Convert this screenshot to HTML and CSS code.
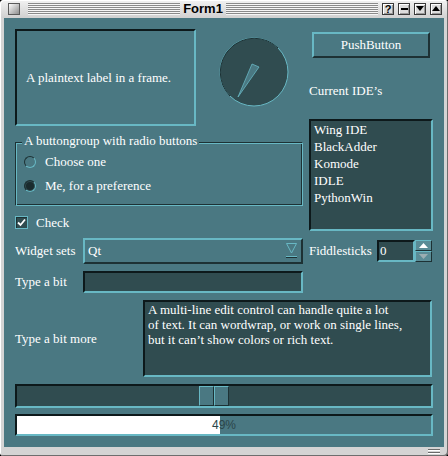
FILE: index.html
```html
<!DOCTYPE html>
<html>
<head>
<meta charset="utf-8">
<title>Form1</title>
<link rel="stylesheet" href="styles.css">
</head>
<body>
<div class="window">
  <div class="titlebar">
    <span class="close-box"></span>
    <span class="stripes"></span>
    <span class="title">Form1</span>
    <span class="stripes stripes-r"></span>
    <span class="tbtn">?</span>
    <span class="tbtn"><span class="tb-dash"></span></span>
    <span class="tbtn"><svg width="8" height="6" viewBox="0 0 8 6"><polygon points="0,0 8,0 4,5" fill="#000"/></svg></span>
    <span class="tbtn"><svg width="8" height="6" viewBox="0 0 8 6"><polygon points="0,5 8,5 4,0" fill="#000"/></svg></span>
  </div>
  <div class="content">
    <div class="top">
      <div class="left">
        <div class="row1">
          <div class="frame sunken">A plaintext label in a frame.</div>
          <svg class="dial" width="70" height="70" viewBox="0 0 70 70">
            <circle cx="35" cy="35" r="34" fill="#304c50" stroke="#68b8c4" stroke-width="1"/>
            <path d="M10.96 59.04 A34 34 0 0 1 59.04 10.96" fill="none" stroke="#1d3134" stroke-width="1"/>
            <polygon points="33,27 40,30 19,60" fill="#4a7882" stroke="#68b8c4" stroke-width="0.8"/>
          </svg>
        </div>
        <div class="group">
          <div class="group-title">A buttongroup with radio buttons</div>
          <div class="radio first"><span class="rb"></span>Choose one</div>
          <div class="radio"><span class="rb on"></span>Me, for a preference</div>
        </div>
        <div class="check"><span class="cb"><svg width="9" height="9" viewBox="0 0 9 9"><polyline points="1,4.5 3.5,7 8,1.5" fill="none" stroke="#fff" stroke-width="1.8"/></svg></span>Check</div>
      </div>
      <div class="right">
        <div class="push raised">PushButton</div>
        <div class="ide-label">Current IDE’s</div>
        <ul class="list sunken">
          <li>Wing IDE</li>
          <li>BlackAdder</li>
          <li>Komode</li>
          <li>IDLE</li>
          <li>PythonWin</li>
        </ul>
      </div>
    </div>
    <div class="row row-combo">
      <span class="lbl">Widget sets</span>
      <div class="combo raised"><span>Qt</span><svg width="11" height="16" viewBox="0 0 11 16"><polygon points="0.5,0.5 10.5,0.5 5.5,10" fill="#4a7882" stroke="#68b8c4"/><rect x="0" y="13" width="11" height="1" fill="#68b8c4"/><rect x="0" y="14" width="11" height="1" fill="#1d3134"/></svg></div>
      <span class="lbl lbl-fid">Fiddlesticks</span>
      <div class="spin">
        <div class="spin-field sunken">0</div>
        <div class="spin-btns">
          <span class="sb"><svg width="9" height="5" viewBox="0 0 9 5"><polygon points="0,5 9,5 4.5,0" fill="#fff"/></svg></span>
          <span class="sb"><svg width="9" height="5" viewBox="0 0 9 5"><polygon points="0,0 9,0 4.5,5" fill="#9aaeb2"/></svg></span>
        </div>
      </div>
    </div>
    <div class="row row-edit">
      <span class="lbl">Type a bit</span>
      <div class="edit sunken"></div>
    </div>
    <div class="row row-multi">
      <span class="lbl lbl-multi">Type a bit more</span>
      <div class="multi sunken">A multi-line edit control can handle quite a lot<br>of text. It can wordwrap, or work on single lines,<br>but it can’t show colors or rich text.</div>
    </div>
    <div class="scroll sunken">
      <div class="handle"><span></span><span></span></div>
    </div>
    <div class="progress sunken">
      <div class="fill" style="width:49%"></div>
      <span class="pct">49%</span>
    </div>
  </div>
  <div class="bottom"><span class="grip"></span></div>
</div>
</body>
</html>
```

FILE: styles.css
```css
* { box-sizing: border-box; }
html, body { margin: 0; padding: 0; }
body {
  background: #000;
  width: 448px;
  height: 456px;
  overflow: hidden;
  font-family: "Liberation Serif", "Times New Roman", serif;
  font-size: 13px;
  color: #fff;
}

.window {
  width: 448px;
  height: 456px;
  display: flex;
  flex-direction: column;
  padding: 0 4px;
  background: linear-gradient(#f2f2f2, #d0d0d0 18px, #d4d4d4 18px);
  border-radius: 4px;
  box-shadow: inset 1px 1px 0 #ffffff, inset -1px -1px 0 #6e6e6e;
}

/* title bar */
.titlebar {
  height: 18px;
  flex: none;
  display: flex;
  align-items: center;
  padding: 0 2px 0 4px;
}
.close-box {
  width: 12px;
  height: 12px;
  flex: none;
  border: 1px solid #5a5a5a;
  background: linear-gradient(135deg, #fdfdfd, #8e8e8e);
}
.stripes {
  flex: 1;
  height: 12px;
  margin-left: 8px;
  background: repeating-linear-gradient(#8a8a8a 0 1px, #f6f6f6 1px 2px);
}
.stripes-r { margin-left: 0; margin-right: 4px; }
.title {
  font: bold 13px "Liberation Sans", Arial, sans-serif;
  color: #000;
  padding: 0 3px;
  line-height: 18px;
}
.tbtn {
  width: 12px;
  height: 12px;
  flex: none;
  margin-right: 4px;
  border: 1px solid #3a3a3a;
  background: #dcdcdc;
  box-shadow: inset 1px 1px 0 #fff, inset -1px -1px 0 #9a9a9a;
  display: flex;
  align-items: center;
  justify-content: center;
  font: bold 11px "Liberation Sans", Arial, sans-serif;
  line-height: 1;
  color: #000;
}
.tbtn:last-child { margin-right: 0; }
.tb-dash { width: 7px; height: 2px; background: #000; }
.tbtn svg { display: block; }

/* content */
.content {
  flex: none;
  height: 429px;
  background: #4a7882;
  padding: 11px 11px 0;
  display: flex;
  flex-direction: column;
}

.sunken { border: 2px solid; border-color: #0d191b #68b8c4 #68b8c4 #0d191b; }
.raised { border: 2px solid; border-color: #68b8c4 #1d3134 #1d3134 #68b8c4; }

.top {
  display: grid;
  grid-template-columns: 288px 124px;
  column-gap: 6px;
  height: 202px;
  flex: none;
}
.row1 { display: flex; align-items: flex-start; height: 97px; }
.frame {
  width: 181px;
  height: 97px;
  flex: none;
  display: flex;
  align-items: center;
  padding-left: 9px;
}
.dial { display: block; flex: none; margin: 8px 0 0 23px; }

.group {
  margin-top: 16px;
  border: 1px solid;
  border-color: #1d3134 #68b8c4 #68b8c4 #1d3134;
  box-shadow: inset 1px 1px 0 #68b8c4, inset -1px -1px 0 #1d3134;
  padding: 0 0 7px 0;
}
.group-title {
  margin: -9px 0 0 6px;
  padding: 0 2px;
  width: max-content;
  line-height: 14px;
  background: #4a7882;
}
.radio {
  display: flex;
  align-items: center;
  height: 24px;
  padding-left: 8px;
}
.radio.first { margin-top: 2px; }
.rb {
  width: 12px;
  height: 12px;
  flex: none;
  border-radius: 50%;
  border: 1px solid;
  border-color: #1d3134 #68b8c4 #68b8c4 #1d3134;
  background: #4a7882;
  margin-right: 9px;
}
.rb.on { background: #1a2b2e; box-shadow: inset 0 0 0 1px #304c50; }

.check {
  display: flex;
  align-items: center;
  height: 13px;
  margin-top: 10px;
}
.cb {
  width: 13px;
  height: 13px;
  flex: none;
  margin-right: 8px;
  border: 1px solid #68b8c4;
  background: #304c50;
  box-shadow: inset 1px 1px 0 #1d3134;
  display: flex;
  align-items: center;
  justify-content: center;
}
.cb svg { display: block; }

.push {
  margin: 3px 0 0 3px;
  width: 118px;
  height: 26px;
  display: flex;
  align-items: center;
  justify-content: center;
  background: #4a7882;
}
.ide-label { margin-top: 25px; line-height: 16px; }
.list {
  margin: 20px 0 0;
  padding: 0;
  list-style: none;
  height: 112px;
  background: #304c50;
}
.list li { line-height: 17px; padding-left: 3px; }

.row { display: flex; align-items: center; margin-top: 7px; flex: none; }
.lbl { width: 68px; flex: none; }
.combo {
  width: 220px;
  height: 26px;
  flex: none;
  display: flex;
  align-items: center;
  justify-content: space-between;
  padding: 0 4px 0 3px;
  background: #4a7882;
}
.combo svg { display: block; }
.lbl-fid { margin-left: 6px; }
.spin { display: flex; height: 22px; flex: none; }
.spin-field {
  width: 38px;
  height: 22px;
  background: #304c50;
  padding-left: 1px;
  line-height: 18px;
}
.spin-btns { display: flex; flex-direction: column; width: 17px; }
.sb {
  height: 11px;
  border: 1px solid;
  border-color: #68b8c4 #1d3134 #1d3134 #68b8c4;
  background: #5a8c96;
  display: flex;
  align-items: center;
  justify-content: center;
}
.sb svg { display: block; }

.edit { width: 220px; height: 22px; flex: none; background: #304c50; }
.lbl-multi { width: 128px; }
.multi {
  width: 289px;
  height: 77px;
  flex: none;
  background: #304c50;
  padding: 0 0 0 3px;
  line-height: 15px;
}

.scroll {
  margin-top: 7px;
  height: 24px;
  flex: none;
  background: #304c50;
  display: flex;
  align-items: center;
  padding-left: 182px;
}
.handle { display: flex; height: 20px; }
.handle span {
  width: 15px;
  height: 20px;
  border: 1px solid;
  border-color: #68b8c4 #1d3134 #1d3134 #68b8c4;
  background: #4a7882;
}

.progress {
  margin-top: 6px;
  height: 22px;
  flex: none;
  display: grid;
  background: #4a7882;
}
.fill { grid-area: 1 / 1; background: #fff; height: 100%; }
.pct {
  grid-area: 1 / 1;
  justify-self: center;
  align-self: center;
  font: 12px "Liberation Sans", Arial, sans-serif;
  color: #2a4549;
}

.bottom {
  flex: 1;
  display: flex;
  justify-content: flex-end;
  align-items: flex-start;
  padding: 2px 4px 0 0;
}
.grip {
  width: 12px;
  height: 5px;
  background: linear-gradient(#6a6a6a 0 1px, #fff 1px 2px, transparent 2px 3px, #6a6a6a 3px 4px, #fff 4px 5px);
}
```
